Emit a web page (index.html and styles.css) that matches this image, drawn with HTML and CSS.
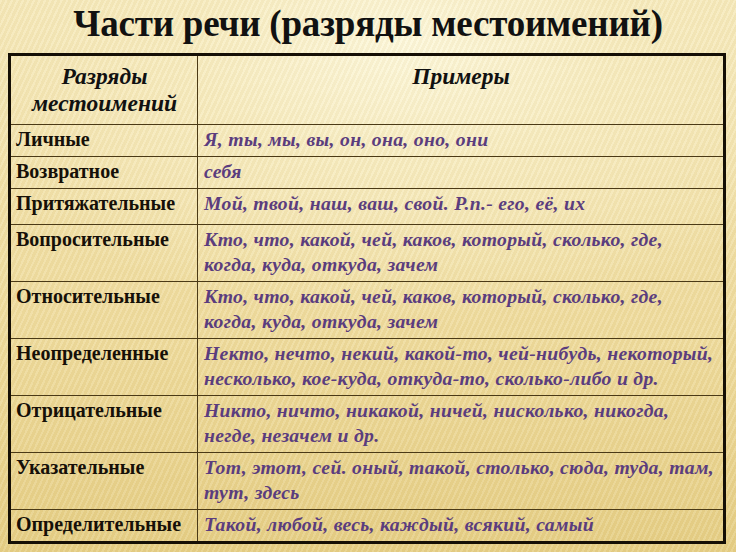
FILE: index.html
```html
<!DOCTYPE html>
<html lang="ru">
<head>
<meta charset="utf-8">
<title>Части речи</title>
<link rel="stylesheet" href="styles.css">
</head>
<body>
<div class="slide">
  <h1 class="title">Части речи (разряды местоимений)</h1>
  <table class="grid">
    <colgroup><col class="c1"><col class="c2"></colgroup>
    <tr class="head">
      <th>Разряды<br>местоимений</th>
      <th>Примеры</th>
    </tr>
    <tr class="r1"><td class="kind">Личные</td><td class="ex">Я, ты, мы, вы, он, она, оно, они</td></tr>
    <tr class="r1"><td class="kind">Возвратное</td><td class="ex">себя</td></tr>
    <tr class="r1b"><td class="kind">Притяжательные</td><td class="ex">Мой, твой, наш, ваш, свой. Р.п.- его, её, их</td></tr>
    <tr class="r2"><td class="kind">Вопросительные</td><td class="ex">Кто, что, какой, чей, каков, который, сколько, где,<br>когда, куда, откуда, зачем</td></tr>
    <tr class="r2"><td class="kind">Относительные</td><td class="ex">Кто, что, какой, чей, каков, который, сколько, где,<br>когда, куда, откуда, зачем</td></tr>
    <tr class="r2"><td class="kind">Неопределенные</td><td class="ex">Некто, нечто, некий, какой-то, чей-нибудь, некоторый,<br>несколько, кое-куда, откуда-то, сколько-либо и др.</td></tr>
    <tr class="r2"><td class="kind">Отрицательные</td><td class="ex">Никто, ничто, никакой, ничей, нисколько, никогда,<br>негде, незачем и др.</td></tr>
    <tr class="r2"><td class="kind">Указательные</td><td class="ex">Тот, этот, сей. оный, такой, столько, сюда, туда, там,<br>тут, здесь</td></tr>
    <tr class="r1"><td class="kind">Определительные</td><td class="ex">Такой, любой, весь, каждый, всякий, самый</td></tr>
  </table>
</div>
</body>
</html>
```
FILE: styles.css
```css
html, body {
  margin: 0;
  padding: 0;
}
body {
  width: 736px;
  height: 552px;
  overflow: hidden;
}
.slide {
  width: 736px;
  height: 552px;
  box-sizing: border-box;
  padding-top: 3px;
  font-family: "Liberation Serif", "Times New Roman", serif;
  color: #111;
  background:
    repeating-linear-gradient(115deg, rgba(255,255,255,0.10) 0 2px, rgba(160,120,40,0.05) 2px 5px),
    radial-gradient(ellipse 65% 50% at 55% 8%, #fdf8dc 0%, #f7ecc0 45%, rgba(247,236,192,0) 100%),
    linear-gradient(180deg, #f5e8b8 0%, #efdc9e 60%, #e6cf86 100%);
}
.title {
  margin: 0 0 8px 0;
  text-align: center;
  font-size: 37px;
  line-height: 42px;
  font-weight: bold;
  color: #111;
  letter-spacing: -0.2px;
}
.grid {
  margin-left: 8px;
  width: 718px;
  border-collapse: collapse;
  border: 3px solid #150f05;
}
.c1 { width: 188px; }
.grid th, .grid td {
  border: 1.5px solid #4b3a16;
  vertical-align: top;
  padding: 2px 5px 3px 6px;
  line-height: 25px;
  text-align: left;
  white-space: nowrap;
}
.grid td.kind { padding-left: 5px; }
.grid th {
  font-style: italic;
  font-weight: bold;
  font-size: 23.5px;
  text-align: center;
  line-height: 27px;
  padding-top: 7px;
  height: 58px;
}
.kind {
  font-weight: bold;
  font-size: 20px;
  color: #161008;
}
.ex {
  font-style: italic;
  font-weight: bold;
  font-size: 19.7px;
  color: #5b3d7e;
  letter-spacing: 0.3px;
}
.r1 td { height: 26px; }
.r1b td { height: 30px; }
.r2 td { height: 51px; }
```
